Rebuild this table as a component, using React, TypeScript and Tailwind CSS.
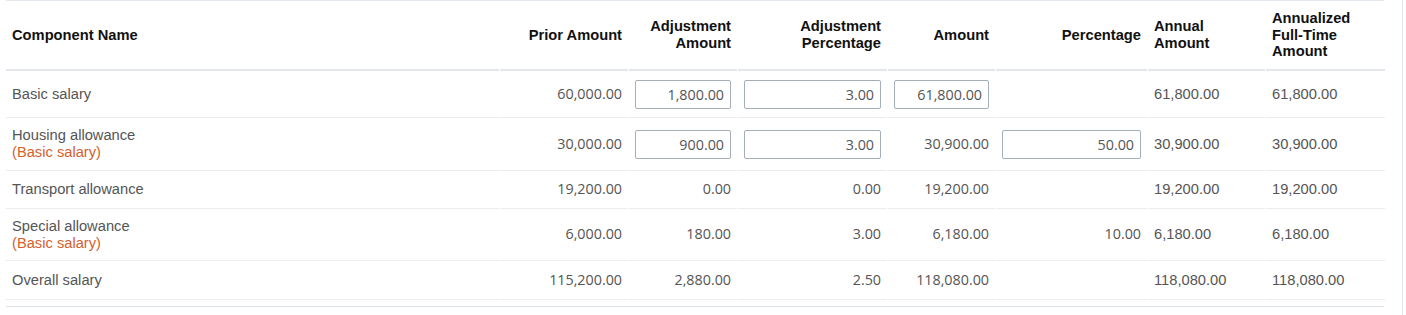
import React from 'react';

type Cell = { v: string; input?: boolean } | null;

interface Row {
  name: string;
  sub?: string;
  prior: string;
  adjAmount: Cell;
  adjPct: Cell;
  amount: Cell;
  pct: Cell;
  annual: string;
  annualized: string;
  h: string;
}

const rows: Row[] = [
  {
    name: 'Basic salary',
    prior: '60,000.00',
    adjAmount: { v: '1,800.00', input: true },
    adjPct: { v: '3.00', input: true },
    amount: { v: '61,800.00', input: true },
    pct: null,
    annual: '61,800.00',
    annualized: '61,800.00',
    h: 'h-[47px]',
  },
  {
    name: 'Housing allowance',
    sub: '(Basic salary)',
    prior: '30,000.00',
    adjAmount: { v: '900.00', input: true },
    adjPct: { v: '3.00', input: true },
    amount: { v: '30,900.00' },
    pct: { v: '50.00', input: true },
    annual: '30,900.00',
    annualized: '30,900.00',
    h: 'h-[53px]',
  },
  {
    name: 'Transport allowance',
    prior: '19,200.00',
    adjAmount: { v: '0.00' },
    adjPct: { v: '0.00' },
    amount: { v: '19,200.00' },
    pct: null,
    annual: '19,200.00',
    annualized: '19,200.00',
    h: 'h-[38px]',
  },
  {
    name: 'Special allowance',
    sub: '(Basic salary)',
    prior: '6,000.00',
    adjAmount: { v: '180.00' },
    adjPct: { v: '3.00' },
    amount: { v: '6,180.00' },
    pct: { v: '10.00' },
    annual: '6,180.00',
    annualized: '6,180.00',
    h: 'h-[52px]',
  },
  {
    name: 'Overall salary',
    prior: '115,200.00',
    adjAmount: { v: '2,880.00' },
    adjPct: { v: '2.50' },
    amount: { v: '118,080.00' },
    pct: null,
    annual: '118,080.00',
    annualized: '118,080.00',
    h: 'h-[39px]',
  },
];

const arial = "font-['Liberation_Sans',Arial,sans-serif]";
const open = "font-['Open_Sans',sans-serif] text-[14.3px]";
const td = 'px-[6px] py-0 border-b border-[#ececec] align-middle';
const th = 'px-[6px] py-0 h-[70px] border-b-2 border-[#e3e7ec] align-middle font-bold text-[14.7px] leading-[16.7px] text-[#111]';

function NumCell({ cell }: { cell: Cell }) {
  if (!cell) return <td className={td} />;
  return (
    <td className={`${td} text-right`}>
      {cell.input ? (
        <input
          readOnly
          value={cell.v}
          className={`${open} block w-full h-[29px] border border-[#a3aeb8] rounded-[2px] bg-white text-right pr-[6px] text-[#555] outline-none`}
        />
      ) : (
        <span className={`${open} text-[#555]`}>{cell.v}</span>
      )}
    </td>
  );
}

export default function App() {
  return (
    <div className={`${arial} w-[1403px] h-[315px] bg-white border-r border-[#dfe5ec]`}>
      <div className="ml-[6px] w-[1378px] h-px bg-[#e2e7ed]" />
      <table className="ml-[5px] w-[1380px] table-fixed border-separate border-spacing-x-[1px] border-spacing-y-0">
        <thead>
          <tr>
            <th className={`${th} w-[493px] text-left`}>Component Name</th>
            <th className={`${th} w-[128px] text-right`}>Prior Amount</th>
            <th className={`${th} w-[108px] text-right`}>
              Adjustment
              <br />
              Amount
            </th>
            <th className={`${th} w-[149px] text-right`}>
              Adjustment
              <br />
              Percentage
            </th>
            <th className={`${th} w-[107px] text-right`}>Amount</th>
            <th className={`${th} w-[151px] text-right`}>Percentage</th>
            <th className={`${th} w-[117px] text-left`}>
              Annual
              <br />
              Amount
            </th>
            <th className={`${th} w-[119px] text-left`}>
              Annualized
              <br />
              Full-Time
              <br />
              Amount
            </th>
          </tr>
        </thead>
        <tbody className="text-[14.7px] leading-[16.7px] text-[#555]">
          {rows.map((r) => (
            <tr key={r.name} className={r.h}>
              <td className={td}>
                <div>{r.name}</div>
                {r.sub && <div className="text-[#d5612b]">{r.sub}</div>}
              </td>
              <td className={`${td} text-right`}>
                <span className={open}>{r.prior}</span>
              </td>
              <NumCell cell={r.adjAmount} />
              <NumCell cell={r.adjPct} />
              <NumCell cell={r.amount} />
              <NumCell cell={r.pct} />
              <td className={td}>{r.annual}</td>
              <td className={td}>{r.annualized}</td>
            </tr>
          ))}
        </tbody>
      </table>
      <div className="ml-[6px] mt-[6px] w-[1378px] h-px bg-[#d9e1ea]" />
    </div>
  );
}
